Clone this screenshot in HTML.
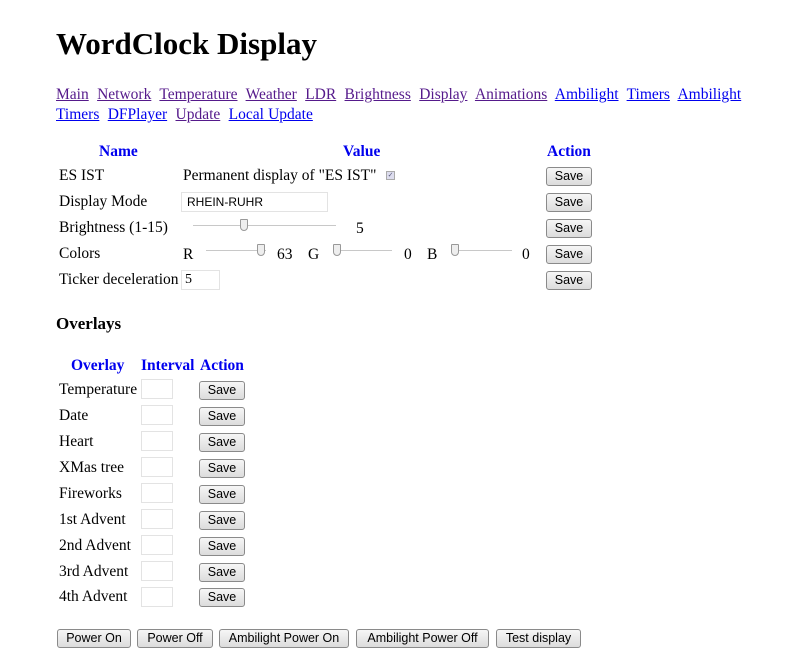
<!DOCTYPE html>
<html><head><style>
body{margin:0;width:790px;height:671px;background:#fff;font-family:"Liberation Serif",serif;font-size:15.5px;color:#000;position:relative;overflow:hidden}
.a{position:absolute;white-space:nowrap;line-height:18px}
h1{position:absolute;left:56px;top:26px;margin:0;font-size:31px;line-height:36px;font-weight:bold}
.h{color:#0000ee;font-weight:bold}
a{color:#0000ee;text-decoration:underline}
a.v{color:#551a8b}
.btn{position:absolute;height:19px;box-sizing:border-box;border:1px solid #8a8a8a;border-radius:3px;background:linear-gradient(#f6f6f6,#dcdcdc);font-family:"Liberation Sans",sans-serif;font-size:12.5px;line-height:17px;text-align:center;color:#000}
.in{position:absolute;box-sizing:border-box;border:1px solid #e3e3e3;background:#fff;height:20px;width:32px}
.sl{position:absolute;height:1px;background:#c8c8c8}
.th{position:absolute;width:6px;height:10px;border:1px solid #999;border-radius:1px 1px 4px 4px;background:#eee}
</style></head><body>
<h1>WordClock Display</h1>
<div class="a" style="left:56px;top:86px;word-spacing:0.3px"><a class="v">Main</a>&nbsp; <a class="v">Network</a>&nbsp; <a class="v">Temperature</a>&nbsp; <a class="v">Weather</a>&nbsp; <a class="v">LDR</a>&nbsp; <a class="v">Brightness</a>&nbsp; <a class="v">Display</a>&nbsp; <a class="v">Animations</a>&nbsp; <a>Ambilight</a>&nbsp; <a>Timers</a>&nbsp; <a>Ambilight</a></div>
<div class="a" style="left:56px;top:106px;word-spacing:0.3px"><a>Timers</a>&nbsp; <a>DFPlayer</a>&nbsp; <a class="v">Update</a>&nbsp; <a>Local Update</a></div>

<div class="a h" style="left:99px;top:143px">Name</div>
<div class="a h" style="left:343px;top:143px">Value</div>
<div class="a h" style="left:547px;top:143px">Action</div>

<div class="a" style="left:59px;top:167px">ES IST</div>
<div class="a" style="left:183px;top:167px">Permanent display of "ES IST"</div>
<div style="position:absolute;left:386px;top:171px;width:7px;height:7px;border:1px solid #aaa;background:#dde;font-size:7px;line-height:7px;color:#557;text-align:center">✓</div>
<div class="btn" style="left:546px;top:167px;width:46px">Save</div>

<div class="a" style="left:59px;top:193px">Display Mode</div>
<div class="in" style="left:181px;top:192px;width:147px;height:20px;font-family:'Liberation Sans',sans-serif;font-size:12px;line-height:18px;padding-left:5px">RHEIN-RUHR</div>
<div class="btn" style="left:546px;top:193px;width:46px">Save</div>

<div class="a" style="left:59px;top:219px">Brightness (1-15)</div>
<div class="sl" style="left:193px;top:225px;width:143px"></div>
<div class="th" style="left:240px;top:219px"></div>
<div class="a" style="left:356px;top:220px">5</div>
<div class="btn" style="left:546px;top:219px;width:46px">Save</div>

<div class="a" style="left:59px;top:245px">Colors</div>
<div class="a" style="left:183px;top:246px">R</div>
<div class="sl" style="left:206px;top:250px;width:60px"></div>
<div class="th" style="left:257px;top:244px"></div>
<div class="a" style="left:277px;top:246px">63</div>
<div class="a" style="left:308px;top:246px">G</div>
<div class="sl" style="left:334px;top:250px;width:58px"></div>
<div class="th" style="left:333px;top:244px"></div>
<div class="a" style="left:404px;top:246px">0</div>
<div class="a" style="left:427px;top:246px">B</div>
<div class="sl" style="left:452px;top:250px;width:60px"></div>
<div class="th" style="left:451px;top:244px"></div>
<div class="a" style="left:522px;top:246px">0</div>
<div class="btn" style="left:546px;top:245px;width:46px">Save</div>

<div class="a" style="left:59px;top:271px">Ticker deceleration</div>
<div class="in" style="left:181px;top:270px;width:39px;font-size:14px;line-height:18px;padding-left:3px">5</div>
<div class="btn" style="left:546px;top:271px;width:46px">Save</div>

<div class="a" style="left:56px;top:315px;font-size:17px;font-weight:bold">Overlays</div>

<div class="a h" style="left:71px;top:357px">Overlay</div>
<div class="a h" style="left:141px;top:357px">Interval</div>
<div class="a h" style="left:200px;top:357px">Action</div>

<div class="a" style="left:59px;top:381px">Temperature</div><div class="in" style="left:141px;top:379px"></div><div class="btn" style="left:199px;top:381px;width:46px">Save</div>
<div class="a" style="left:59px;top:407px">Date</div><div class="in" style="left:141px;top:405px"></div><div class="btn" style="left:199px;top:407px;width:46px">Save</div>
<div class="a" style="left:59px;top:433px">Heart</div><div class="in" style="left:141px;top:431px"></div><div class="btn" style="left:199px;top:433px;width:46px">Save</div>
<div class="a" style="left:59px;top:459px">XMas tree</div><div class="in" style="left:141px;top:457px"></div><div class="btn" style="left:199px;top:459px;width:46px">Save</div>
<div class="a" style="left:59px;top:485px">Fireworks</div><div class="in" style="left:141px;top:483px"></div><div class="btn" style="left:199px;top:485px;width:46px">Save</div>
<div class="a" style="left:59px;top:511px">1st Advent</div><div class="in" style="left:141px;top:509px"></div><div class="btn" style="left:199px;top:511px;width:46px">Save</div>
<div class="a" style="left:59px;top:537px">2nd Advent</div><div class="in" style="left:141px;top:535px"></div><div class="btn" style="left:199px;top:537px;width:46px">Save</div>
<div class="a" style="left:59px;top:563px">3rd Advent</div><div class="in" style="left:141px;top:561px"></div><div class="btn" style="left:199px;top:563px;width:46px">Save</div>
<div class="a" style="left:59px;top:588px">4th Advent</div><div class="in" style="left:141px;top:587px"></div><div class="btn" style="left:199px;top:588px;width:46px">Save</div>

<div class="btn" style="left:57px;top:629px;width:74px">Power On</div>
<div class="btn" style="left:137px;top:629px;width:76px">Power Off</div>
<div class="btn" style="left:219px;top:629px;width:130px">Ambilight Power On</div>
<div class="btn" style="left:356px;top:629px;width:133px">Ambilight Power Off</div>
<div class="btn" style="left:496px;top:629px;width:85px">Test display</div>
</body></html>
